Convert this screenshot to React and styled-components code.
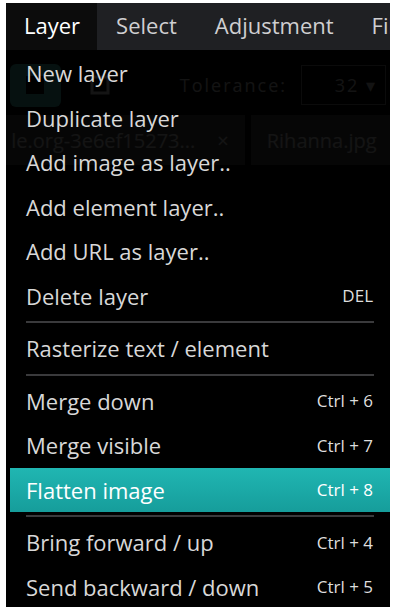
import React from "react";
import styled, { createGlobalStyle } from "styled-components";

const GlobalStyle = createGlobalStyle`
  body {
    margin: 0;
    background: #fff;
    font-family: "Open Sans", "Noto Sans", sans-serif;
  }
`;

const Page = styled.div`
  padding: 3px 10px 7px 6px;
`;

const Frame = styled.div`
  height: 604px;
  background: #000;
  overflow: hidden;
  display: flex;
  flex-direction: column;
`;

const MenuBar = styled.div`
  height: 47px;
  flex: none;
  display: flex;
  align-items: stretch;
  background: #1f2023;
  overflow: hidden;
  white-space: nowrap;
`;

const MenuTab = styled.div`
  display: flex;
  align-items: center;
  padding: ${({ active }) => (active ? "0 17px 3px 18px" : "0 19px 3px")};
  font-size: 22px;
  color: ${({ active }) => (active ? "#fff" : "#cfcfd1")};
  background: ${({ active }) => (active ? "#0c0c0c" : "transparent")};
`;

const Body = styled.div`
  position: relative;
  flex: 1;
`;

const Backdrop = styled.div`
  position: absolute;
  inset: 0;
  opacity: 0.08;
  pointer-events: none;
`;

const Toolbar = styled.div`
  height: 60px;
  display: flex;
  align-items: center;
  gap: 14px;
  padding: 0 4px;
`;

const ToolButton = styled.div`
  width: 53px;
  height: 43px;
  border-radius: 6px;
  background: ${({ accent }) => (accent ? "#4fd0c4" : "transparent")};
  display: flex;
  align-items: center;
  justify-content: center;
  margin-top: 10px;
`;

const Label = styled.span`
  margin-left: 40px;
  margin-top: 10px;
  font-size: 18px;
  letter-spacing: 2px;
  color: #eee;
`;

const SelectBox = styled.div`
  width: 88px;
  height: 40px;
  margin-top: 10px;
  border: 1px solid #888;
  display: flex;
  align-items: center;
  justify-content: flex-end;
  padding-right: 8px;
  box-sizing: border-box;
  font-size: 18px;
  letter-spacing: 2px;
  color: #eee;
`;

const TabStrip = styled.div`
  margin-top: 5px;
  height: 50px;
  display: flex;
  gap: 6px;
`;

const FileTab = styled.div`
  display: flex;
  align-items: center;
  gap: 22px;
  padding: ${({ first }) => (first ? "0 16px 0 0" : "0 16px")};
  width: ${({ first }) => (first ? "244px" : "auto")};
  box-sizing: border-box;
  background: #555;
  color: #fff;
  font-size: 20px;
  white-space: nowrap;
  overflow: hidden;
  justify-content: ${({ first }) => (first ? "flex-end" : "flex-start")};
`;

const Dropdown = styled.div`
  position: relative;
  margin-left: 4px;
  padding-top: 1px;
`;

const Item = styled.div`
  height: 44.5px;
  display: flex;
  align-items: center;
  justify-content: space-between;
  padding: 0 17px 0 16px;
  font-size: 22px;
  color: ${({ active }) => (active ? "#fff" : "#d8d8d8")};
  background: ${({ active }) =>
    active ? "linear-gradient(180deg, #20b6b2 0%, #169d9b 100%)" : "transparent"};
`;

const Shortcut = styled.span`
  font-size: 17px;
  color: ${({ active }) => (active ? "#fff" : "#dedede")};
`;

const Separator = styled.div`
  margin: 3px 16px 3px 16px;
  height: 2px;
  background: #3a3a3c;
`;

const menu = [
  { label: "New layer" },
  { label: "Duplicate layer" },
  { label: "Add image as layer.." },
  { label: "Add element layer.." },
  { label: "Add URL as layer.." },
  { label: "Delete layer", key: "DEL" },
  { sep: true },
  { label: "Rasterize text / element" },
  { sep: true },
  { label: "Merge down", key: "Ctrl + 6" },
  { label: "Merge visible", key: "Ctrl + 7" },
  { label: "Flatten image", key: "Ctrl + 8", active: true },
  { sep: true },
  { label: "Bring forward / up", key: "Ctrl + 4" },
  { label: "Send backward / down", key: "Ctrl + 5" },
];

export default function App() {
  return (
    <>
      <GlobalStyle />
      <Page>
        <Frame>
          <MenuBar>
            <MenuTab active>Layer</MenuTab>
            <MenuTab>Select</MenuTab>
            <MenuTab>Adjustment</MenuTab>
            <MenuTab>Filters</MenuTab>
          </MenuBar>
          <Body>
            <Backdrop>
              <Toolbar>
                <ToolButton accent>
                  <svg width="22" height="22" viewBox="0 0 22 22">
                    <rect x="2" y="2" width="18" height="18" fill="#000" />
                  </svg>
                </ToolButton>
                <ToolButton>
                  <svg width="22" height="22" viewBox="0 0 22 22">
                    <rect x="3" y="3" width="16" height="16" fill="none" stroke="#fff" strokeWidth="3" />
                  </svg>
                </ToolButton>
                <Label>Tolerance:</Label>
                <SelectBox>32 ▾</SelectBox>
              </Toolbar>
              <TabStrip>
                <FileTab first>
                  <span>le.org-3e6ef15273...</span>
                  <span>×</span>
                </FileTab>
                <FileTab>Rihanna.jpg</FileTab>
              </TabStrip>
            </Backdrop>
            <Dropdown>
              {menu.map((m, i) =>
                m.sep ? (
                  <Separator key={i} />
                ) : (
                  <Item key={i} active={m.active}>
                    <span>{m.label}</span>
                    {m.key && <Shortcut active={m.active}>{m.key}</Shortcut>}
                  </Item>
                )
              )}
            </Dropdown>
          </Body>
        </Frame>
      </Page>
    </>
  );
}
